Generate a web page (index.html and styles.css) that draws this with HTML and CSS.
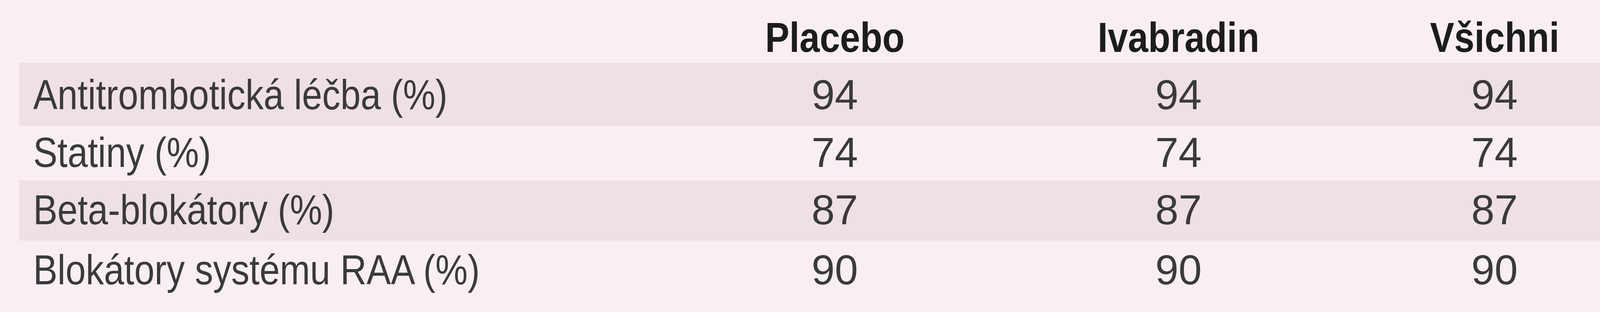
FILE: index.html
```html
<!DOCTYPE html>
<html lang="cs">
<head>
<meta charset="utf-8">
<title>Tabulka</title>
<link rel="stylesheet" href="styles.css">
</head>
<body>
<div class="table">
  <div class="row head">
    <div class="cell label"></div>
    <div class="cell num"><span class="txt">Placebo</span></div>
    <div class="cell num"><span class="txt">Ivabradin</span></div>
    <div class="cell num"><span class="txt">Všichni</span></div>
  </div>
  <div class="row r1 band">
    <div class="cell label"><span class="txt">Antitrombotická léčba (%)</span></div>
    <div class="cell num">94</div>
    <div class="cell num">94</div>
    <div class="cell num">94</div>
  </div>
  <div class="row r2">
    <div class="cell label"><span class="txt">Statiny (%)</span></div>
    <div class="cell num">74</div>
    <div class="cell num">74</div>
    <div class="cell num">74</div>
  </div>
  <div class="row r3 band">
    <div class="cell label"><span class="txt">Beta-blokátory (%)</span></div>
    <div class="cell num">87</div>
    <div class="cell num">87</div>
    <div class="cell num">87</div>
  </div>
  <div class="row r4">
    <div class="cell label"><span class="txt">Blokátory systému RAA (%)</span></div>
    <div class="cell num">90</div>
    <div class="cell num">90</div>
    <div class="cell num">90</div>
  </div>
</div>
</body>
</html>
```

FILE: styles.css
```css
html, body {
  margin: 0;
  padding: 0;
  background: #f8eef4;
}
body {
  font-family: "Liberation Sans", Arial, sans-serif;
  font-size: 107px;
  color: #3a3a3a;
}
.table {
  margin-left: 49px;
  width: 4104px;
  display: flex;
  flex-direction: column;
}
.row {
  display: grid;
  grid-template-columns: 1690px 796px 964px 654px;
  box-sizing: border-box;
}
.cell {
  line-height: 120px;
  white-space: nowrap;
}
.label {
  padding-left: 36px;
}
.num {
  text-align: center;
}
.txt {
  display: inline-block;
  transform: scaleX(0.87);
}
.label .txt {
  transform-origin: left center;
}
.num .txt {
  transform-origin: center center;
}
.band {
  background: #eee0e6;
}
.head {
  height: 161px;
  padding-top: 36px;
  font-weight: bold;
  color: #1c1c1c;
}
.r1 {
  height: 162px;
  padding-top: 22px;
}
.r2 {
  height: 140px;
  padding-top: 8px;
}
.r3 {
  height: 154px;
  padding-top: 15px;
}
.r4 {
  height: 154px;
  padding-top: 15px;
}
```
